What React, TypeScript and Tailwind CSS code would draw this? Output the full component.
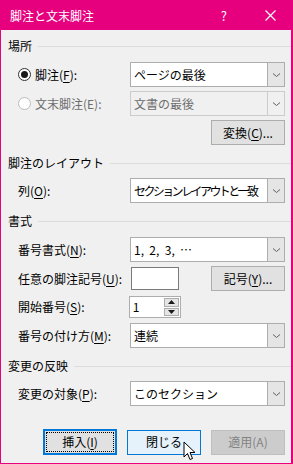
import React from "react";

const font = { fontFamily: '"Noto Sans CJK JP", "Noto Sans", sans-serif' };

const Chevron = () => (
  <svg width="9" height="6" viewBox="0 0 9 6">
    <path d="M1 1.5 L4.5 4.5 L8 1.5" fill="none" stroke="#606060" strokeWidth="1" />
  </svg>
);

const Select = ({ value, disabled, tight }: { value: string; disabled?: boolean; tight?: boolean }) => (
  <div
    className={`ml-auto flex h-[25px] w-[155px] border ${
      disabled ? "border-[#cccccc] bg-[#f0f0f0] text-[#6d6d6d]" : "border-[#adadad] bg-white text-black"
    }`}
  >
    <div
      className={`flex flex-1 items-center overflow-hidden pl-[3px] whitespace-pre ${
        tight ? "tracking-[-2.6px]" : ""
      }`}
    >
      {value}
    </div>
    <div
      className={`flex w-[17px] shrink-0 items-center justify-center border-l ${
        disabled ? "border-[#cccccc] bg-[#f0f0f0]" : "border-[#adadad] bg-[#e5e5e5]"
      }`}
    >
      <Chevron />
    </div>
  </div>
);

const Header = ({ text }: { text: string }) => (
  <div className="flex h-4 items-center gap-[6px] pl-[7px] text-black">
    <span className="leading-4 whitespace-nowrap">{text}</span>
    <div className="h-px flex-1 bg-[#dcdcdc]" />
  </div>
);

const U = ({ c }: { c: string }) => <span className="underline underline-offset-[1.5px]">{c}</span>;

const Row = ({ children, className = "" }: { children: React.ReactNode; className?: string }) => (
  <div className={`flex items-center pl-[17px] pr-[6px] ${className}`}>{children}</div>
);

const Button = ({ children, className = "" }: { children: React.ReactNode; className?: string }) => (
  <div
    className={`flex h-[25px] w-[74px] items-center justify-center border border-[#adadad] bg-[#e1e1e1] ${className}`}
  >
    {children}
  </div>
);

export default function App() {
  return (
    <div style={font} className="h-[464px] w-[293px] bg-white text-[12px]">
      <div className="flex h-[464px] w-[293px] flex-col border border-r-2 border-[#e6007e] bg-[#f0f0f0]">
        <div className="flex h-[29px] shrink-0 items-center bg-[#e6007e] text-white">
          <span className="pl-[9px] text-[12px]">脚注と文末脚注</span>
          <span className="ml-auto mr-[38px] text-[13px]">?</span>
          <svg className="mr-[15px]" width="11" height="11" viewBox="0 0 11 11">
            <path d="M0.5 0.5 L10.5 10.5 M10.5 0.5 L0.5 10.5" stroke="white" strokeWidth="1.2" />
          </svg>
        </div>

        <div className="mt-[8px]">
          <Header text="場所" />
        </div>

        <Row className="mt-[8px] pl-[16px]">
          <div className="flex h-[13px] w-[13px] items-center justify-center rounded-full border border-[#333333] bg-white">
            <div className="h-[7px] w-[7px] rounded-full bg-[#1a1a1a]" />
          </div>
          <span className="ml-[4px]">
            脚注(<U c="F" />):
          </span>
          <Select value="ページの最後" />
        </Row>

        <Row className="mt-[4px] pl-[16px]">
          <div className="h-[13px] w-[13px] rounded-full border border-[#bcbcbc] bg-white" />
          <span className="ml-[4px] text-[#6d6d6d]">文末脚注(E):</span>
          <Select value="文書の最後" disabled />
        </Row>

        <Row className="mt-[4px]">
          <Button className="ml-auto">
            変換(<U c="C" />)...
          </Button>
        </Row>

        <div className="mt-[10px]">
          <Header text="脚注のレイアウト" />
        </div>

        <Row className="mt-[7px]">
          <span>
            列(<U c="O" />):
          </span>
          <Select value="セクション  レイアウトと一致" tight />
        </Row>

        <div className="mt-[10px]">
          <Header text="書式" />
        </div>

        <Row className="mt-[8px]">
          <span>
            番号書式(<U c="N" />):
          </span>
          <Select value="1,  2,  3,  ⋯" />
        </Row>

        <Row className="mt-[4px] h-[25px]">
          <span>
            任意の脚注記号(<U c="U" />):
          </span>
          <div className="ml-auto h-[23px] w-[48px] border border-[#7a7a7a] bg-white" />
          <Button className="ml-[32px]">
            記号(<U c="Y" />)...
          </Button>
        </Row>

        <Row className="mt-[5px]">
          <span>
            開始番号(<U c="S" />):
          </span>
          <div className="ml-[44px] flex h-[22px] w-[52px] border border-[#adadad] bg-white">
            <div className="flex flex-1 items-center pl-[3px]">1</div>
            <div className="flex w-[17px] flex-col gap-px bg-white p-px">
              <div className="flex flex-1 items-center justify-center border border-[#adadad] bg-[#e5e5e5]">
                <svg width="7" height="4" viewBox="0 0 7 4">
                  <path d="M0 4 L3.5 0 L7 4 Z" fill="#1a1a1a" />
                </svg>
              </div>
              <div className="flex flex-1 items-center justify-center border border-[#adadad] bg-[#e5e5e5]">
                <svg width="7" height="4" viewBox="0 0 7 4">
                  <path d="M0 0 L3.5 4 L7 0 Z" fill="#1a1a1a" />
                </svg>
              </div>
            </div>
          </div>
          <div className="flex-1" />
        </Row>

        <Row className="mt-[5px]">
          <span>
            番号の付け方(<U c="M" />):
          </span>
          <Select value="連続" />
        </Row>

        <div className="mt-[10px]">
          <Header text="変更の反映" />
        </div>

        <Row className="mt-[7px]">
          <span>
            変更の対象(<U c="P" />):
          </span>
          <Select value="このセクション" />
        </Row>

        <Row className="mt-[23px] gap-[10px] justify-end">
          <div className="flex h-[26px] w-[74px] items-center justify-center border-2 border-[#0078d7] bg-[#e1e1e1] p-px">
            <div className="flex h-full w-full items-center justify-center border border-dotted border-black">
              挿入(<U c="I" />)
            </div>
          </div>
          <div className="relative flex h-[25px] w-[74px] items-center justify-center border border-[#0078d7] bg-[#e5f1fb]">
            閉じる
            <svg className="absolute left-[55px] top-[10px]" width="13" height="20" viewBox="0 0 13 20">
              <path
                d="M1 1 L1 16 L4.5 12.5 L7 18.5 L9.5 17.5 L7 11.5 L12 11.5 Z"
                fill="white"
                stroke="black"
                strokeWidth="1"
                strokeLinejoin="miter"
              />
            </svg>
          </div>
          <div className="flex h-[25px] w-[74px] items-center justify-center border border-[#bfbfbf] bg-[#cccccc] text-[#838383]">
            適用(A)
          </div>
        </Row>
      </div>
    </div>
  );
}
